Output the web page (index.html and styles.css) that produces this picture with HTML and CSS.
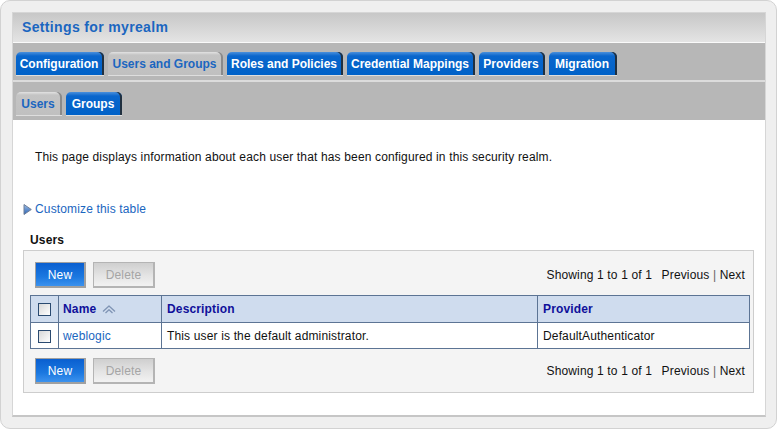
FILE: index.html
```html
<!DOCTYPE html>
<html>
<head>
<meta charset="utf-8">
<title>Settings for myrealm</title>
<link rel="stylesheet" href="styles.css">
</head>
<body>
<div class="frame">
  <div class="panel">
    <div class="titlebar">Settings for myrealm</div>
    <div class="tabbar">
      <span class="tab w-config">Configuration</span>
      <span class="tab tab-active w-users-groups">Users and Groups</span>
      <span class="tab w-roles">Roles and Policies</span>
      <span class="tab w-cred">Credential Mappings</span>
      <span class="tab w-prov">Providers</span>
      <span class="tab w-migr">Migration</span>
    </div>
    <div class="tabbar subbar">
      <span class="tab tab-active w-users">Users</span>
      <span class="tab w-groups">Groups</span>
    </div>
    <div class="content">
      <p class="intro">This page displays information about each user that has been configured in this security realm.</p>
      <div class="customize">
        <svg class="tri" width="9" height="11" viewBox="0 0 9 11">
          <defs>
            <linearGradient id="tg" x1="0" y1="0" x2="0" y2="1">
              <stop offset="0" stop-color="#9dbfe8"/>
              <stop offset="1" stop-color="#2a62b4"/>
            </linearGradient>
          </defs>
          <path d="M1 0.5 L8.3 5.5 L1 10.5 Z" fill="url(#tg)" stroke="#6f7f98" stroke-width="1"/>
        </svg>
        <span class="link">Customize this table</span>
      </div>
      <div class="section-title">Users</div>
      <div class="box">
        <div class="toolbar">
          <div class="buttons">
            <span class="btn btn-primary">New</span>
            <span class="btn btn-disabled">Delete</span>
          </div>
          <div class="pager">Showing 1 to 1 of 1 <span class="pgap"></span>Previous <span class="sep">|</span> Next</div>
        </div>
        <table class="grid">
          <colgroup>
            <col class="col-chk">
            <col class="col-name">
            <col class="col-desc">
            <col class="col-prov">
          </colgroup>
          <thead>
            <tr>
              <th class="c-chk"><span class="chk"></span></th>
              <th class="c-name">Name
                <svg class="sort" width="14" height="9" viewBox="0 0 14 9">
                  <path d="M1 6.5 L7 1 L13 6.5" fill="none" stroke="#7f94b4" stroke-width="1.3" stroke-linejoin="round"/>
                  <path d="M3.5 8 L7 4.8 L10.5 8" fill="none" stroke="#7f94b4" stroke-width="1.3" stroke-linejoin="round"/>
                </svg>
              </th>
              <th class="c-desc">Description</th>
              <th class="c-prov">Provider</th>
            </tr>
          </thead>
          <tbody>
            <tr>
              <td class="c-chk"><span class="chk"></span></td>
              <td class="c-name"><span class="link">weblogic</span></td>
              <td class="c-desc">This user is the default administrator.</td>
              <td class="c-prov">DefaultAuthenticator</td>
            </tr>
          </tbody>
        </table>
        <div class="toolbar toolbar-bottom">
          <div class="buttons">
            <span class="btn btn-primary">New</span>
            <span class="btn btn-disabled">Delete</span>
          </div>
          <div class="pager">Showing 1 to 1 of 1 <span class="pgap"></span>Previous <span class="sep">|</span> Next</div>
        </div>
      </div>
    </div>
  </div>
</div>
</body>
</html>
```
FILE: styles.css
```css
html, body {
  margin: 0;
  padding: 0;
  background: #ffffff;
}
body {
  font-family: "Liberation Sans", Arial, sans-serif;
  font-size: 12px;
  letter-spacing: 0.15px;
  color: #000;
}
.frame {
  width: 777px;
  height: 429px;
  box-sizing: border-box;
  border: 1px solid #d2d2d2;
  border-radius: 10px;
  background: #efefef;
  padding: 11px 10px 11px 11px;
}
.panel {
  height: 405px;
  box-sizing: border-box;
  background: #fff;
  border: 1px solid #d6d6d6;
  border-bottom: 2px solid #c6c6c6;
}
.titlebar {
  height: 29px;
  line-height: 29px;
  padding-left: 9px;
  font-weight: bold;
  font-size: 14px;
  letter-spacing: 0.35px;
  color: #1b66c0;
  background: linear-gradient(#c7c7c7, #e4e4e4);
  border-bottom: 1px solid #fafafa;
}
.tabbar {
  height: 39px;
  box-sizing: border-box;
  background: #b7b7b7;
  padding: 9px 0 0 3px;
  display: flex;
  align-items: flex-start;
  gap: 4px;
  border-bottom: 2px solid #dcdcdc;
}
.subbar {
  height: 38px;
  padding-top: 10px;
  border-bottom: none;
}
.tab {
  height: 24px;
  box-sizing: border-box;
  line-height: 24px;
  padding: 0 2px 0 0;
  text-align: center;
  white-space: nowrap;
  font-weight: bold;
  font-size: 12px;
  letter-spacing: 0;
  color: #fff;
  background: linear-gradient(#4a90dc 0px, #0a66cc 4px, #0062c8 100%);
  border-radius: 5px 5px 0 0;
  box-shadow: inset -2px 0 0 #203040;
  border-bottom: 1px solid #dedede;
}
.tab-active {
  color: #1b66c0;
  background: linear-gradient(#e2e2e2 0px, #c4c4c4 3px, #c0c0c0 100%);
  box-shadow: inset -2px 0 0 #8a8a8a;
}
.w-config { width: 88px; }
.w-users-groups { width: 115px; }
.w-roles { width: 116px; }
.w-cred { width: 128px; }
.w-prov { width: 66px; }
.w-migr { width: 68px; }
.w-users { width: 46px; }
.w-groups { width: 56px; }
.content {
  padding: 0 0 0 10px;
}
.intro {
  margin: 30px 0 0 12px;
  line-height: 14px;
  color: #111;
}
.customize {
  margin-top: 38px;
  height: 14px;
  display: flex;
  align-items: center;
  gap: 3px;
}
.tri {
  display: block;
}
.link {
  color: #1a66c0;
}
.section-title {
  margin: 17px 0 0 7px;
  line-height: 14px;
  font-weight: bold;
  color: #111;
}
.box {
  margin-top: 3px;
  width: 731px;
  height: 143px;
  box-sizing: border-box;
  border: 1px solid #cdcdcd;
  background: #f4f4f4;
  padding: 11px 5px 0 6px;
}
.toolbar {
  display: flex;
  justify-content: space-between;
  align-items: center;
  padding: 0 3px 0 5px;
  height: 26px;
}
.toolbar-bottom {
  margin-top: 9px;
}
.buttons {
  display: flex;
  gap: 7px;
}
.btn {
  display: block;
  height: 26px;
  box-sizing: border-box;
  line-height: 24px;
  text-align: center;
  font-size: 12px;
  border: 1px solid #a8a8a8;
  border-width: 1px 2px 2px 1px;
}
.btn-primary {
  width: 51px;
  color: #fff;
  background: linear-gradient(#0a5fd0, #1b78e0 60%, #3c92ee);
  border-color: #a0a0a0;
}
.btn-disabled {
  width: 62px;
  color: #a5a5a5;
  background: linear-gradient(#cfcfcf, #e4e4e4 55%, #f2f2f2);
  border-color: #b4b4b4;
}
.pager {
  color: #111;
}
.pgap {
  display: inline-block;
  width: 6px;
}
.sep {
  color: #666;
}
.grid {
  margin-top: 7px;
  width: 719px;
  table-layout: fixed;
  border-collapse: collapse;
  background: #fff;
}
.col-chk { width: 28px; }
.col-name { width: 103px; }
.col-desc { width: 376px; }
.col-prov { width: 212px; }
.grid th, .grid td {
  border: 1px solid #5c7494;
  padding: 0 4px;
  text-align: left;
  white-space: nowrap;
  overflow: hidden;
}
.grid th {
  background: #cfdcee;
  color: #10109a;
  font-weight: bold;
  height: 26px;
}
.grid td {
  color: #111;
  height: 25px;
}
.grid .c-chk {
  padding: 0;
  text-align: center;
}
.grid .c-desc, .grid .c-prov {
  padding-left: 5px;
}
.chk {
  display: inline-block;
  width: 13px;
  height: 13px;
  box-sizing: border-box;
  border: 1px solid #2a4a70;
  background: linear-gradient(135deg, #d8d8d8, #ffffff);
  vertical-align: middle;
}
.sort {
  vertical-align: middle;
  margin-left: 2px;
}
```
